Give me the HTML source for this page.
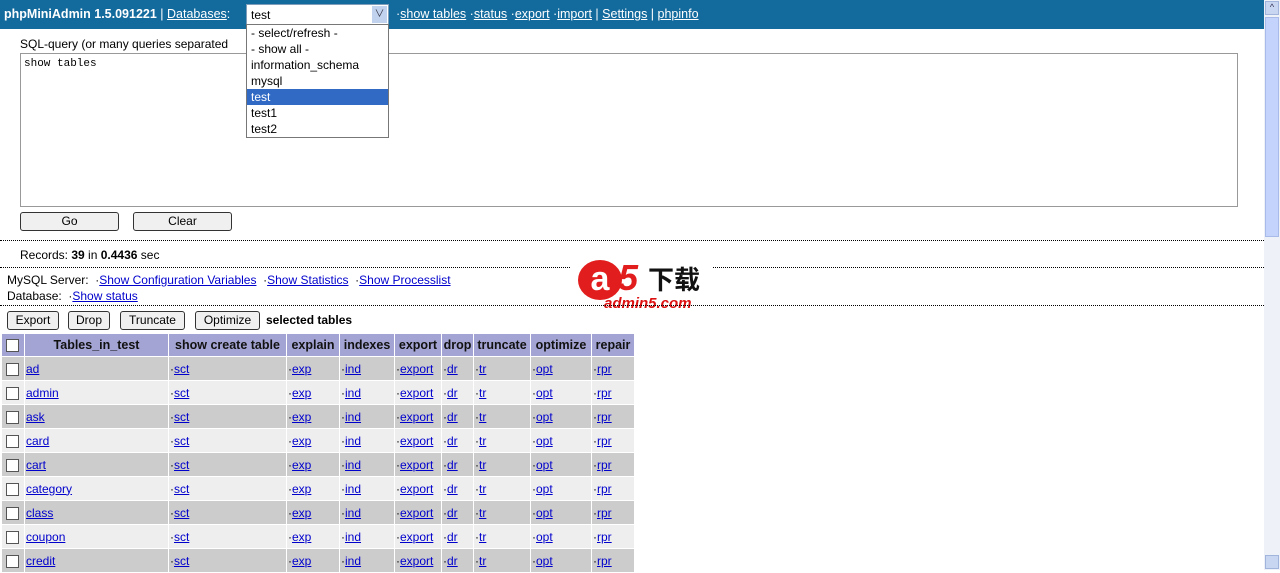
<!DOCTYPE html>
<html><head><meta charset="utf-8"><style>
body{margin:0;width:1280px;height:570px;overflow:hidden;background:#fff;font-family:"Liberation Sans","Noto Sans CJK SC",sans-serif;font-size:12px;position:relative}
a{color:#00c;text-decoration:underline}
.top{position:absolute;left:0;top:0;width:1264px;height:29px;background:#136a9d;color:#fff}
.top a{color:#fff}
.abs{position:absolute;white-space:nowrap}
.btn{position:absolute;border:1px solid #333;border-radius:3px;background:#f0f0f0;text-align:center;line-height:17px;height:17px;font-size:12px}
.dot{position:absolute;left:0;width:1264px;border-top:1px dotted #000}
table{position:absolute;left:1px;top:333px;border-collapse:separate;border-spacing:1px;font-size:12px;table-layout:fixed;width:634px}
td,th{height:23px;padding:0 1px;white-space:nowrap;overflow:hidden}
th{background:#a4a4d4;font-weight:bold;color:#111;height:22px;font-size:12.5px}
tr.o td{background:#cccccc}tr.e td{background:#eeeeee}
.cb{display:inline-block;width:11px;height:11px;border:1px solid #555;background:#fff;vertical-align:middle;margin-left:3px}
.sb{position:absolute;left:1264px;top:0;width:16px;height:570px;background:#eef2f8}
</style></head><body>
<div class="top">
<div class="abs" style="left:4px;top:7px;font-size:12.5px"><b>phpMiniAdmin 1.5.091221</b> | <a>Databases</a>:</div>
<div class="abs" style="left:246px;top:4px;width:141px;height:19px;background:#fff;border:1px solid #7f9db9;color:#000"><span style="position:absolute;left:4px;top:3px">test</span><span style="position:absolute;right:1px;top:1px;width:15px;height:17px;background:#c1d2ee;color:#334;font-size:10px;text-align:center;line-height:17px">&#8744;</span></div>
<div class="abs" style="left:396px;top:7px;font-size:12.5px">·<a>show tables</a> ·<a>status</a> ·<a>export</a> ·<a>import</a> | <a>Settings</a> | <a>phpinfo</a></div>
</div>
<div class="abs" style="left:20px;top:37px">SQL-query (or many queries separated</div>
<div class="abs" style="left:20px;top:53px;width:1218px;border:1px solid #999;font-family:'Liberation Mono',monospace;font-size:11px;padding:4px 3px;box-sizing:border-box;height:154px">show tables</div>
<div class="abs" style="left:246px;top:24px;width:141px;height:112px;background:#fff;border:1px solid #777;color:#000;line-height:16px">
<div style="padding-left:4px">- select/refresh -</div><div style="padding-left:4px">- show all -</div><div style="padding-left:4px">information_schema</div><div style="padding-left:4px">mysql</div><div style="padding-left:4px;background:#316ac5;color:#fff">test</div><div style="padding-left:4px">test1</div><div style="padding-left:4px">test2</div></div>
<div class="btn" style="left:20px;top:212px;width:97px">Go</div>
<div class="btn" style="left:133px;top:212px;width:97px">Clear</div>
<div class="dot" style="top:240px"></div>
<div class="abs" style="left:20px;top:248px">Records: <b>39</b> in <b>0.4436</b> sec</div>
<div class="dot" style="top:267px"></div>
<div class="abs" style="left:7px;top:273px">MySQL Server: &nbsp;·<a>Show Configuration Variables</a> &nbsp;·<a>Show Statistics</a> &nbsp;·<a>Show Processlist</a></div>
<div class="abs" style="left:7px;top:289px">Database: &nbsp;·<a>Show status</a></div>
<div class="abs" style="left:570px;top:258px;width:142px;height:55px;background:#fff">
<div style="position:absolute;left:8px;top:2px;width:44px;height:40px;border-radius:50%;background:#e21d1d;color:#fff;font:bold 34px/38px 'Liberation Sans';text-align:center">a</div>
<div style="position:absolute;left:48px;top:0;color:#e21d1d;font:bold italic 36px/40px 'Liberation Sans'">5</div>
<div style="position:absolute;left:78px;top:6px;font:bold 26px/30px 'Noto Sans CJK SC',sans-serif;color:#111">下载</div>
<div style="position:absolute;left:34px;top:38px;font:bold italic 15px/16px 'Liberation Sans';color:#d11">admin5.com</div></div>
<div class="dot" style="top:305px"></div>
<div class="btn" style="left:7px;top:311px;width:50px">Export</div>
<div class="btn" style="left:68px;top:311px;width:40px">Drop</div>
<div class="btn" style="left:120px;top:311px;width:63px">Truncate</div>
<div class="btn" style="left:195px;top:311px;width:63px">Optimize</div>
<div class="abs" style="left:266px;top:313px"><b>selected tables</b></div>
<table>
<colgroup><col style="width:22px"><col style="width:143px"><col style="width:117px"><col style="width:52px"><col style="width:54px"><col style="width:46px"><col style="width:31px"><col style="width:56px"><col style="width:60px"><col style="width:42px"></colgroup>
<tr><th style="text-align:left"><span class="cb"></span></th><th>Tables_in_test</th><th>show create table</th><th>explain</th><th>indexes</th><th>export</th><th>drop</th><th>truncate</th><th>optimize</th><th>repair</th></tr>
<tr class="o"><td><span class="cb"></span></td><td><a>ad</a></td><td>·<a>sct</a></td><td>·<a>exp</a></td><td>·<a>ind</a></td><td>·<a>export</a></td><td>·<a>dr</a></td><td>·<a>tr</a></td><td>·<a>opt</a></td><td>·<a>rpr</a></td></tr>
<tr class="e"><td><span class="cb"></span></td><td><a>admin</a></td><td>·<a>sct</a></td><td>·<a>exp</a></td><td>·<a>ind</a></td><td>·<a>export</a></td><td>·<a>dr</a></td><td>·<a>tr</a></td><td>·<a>opt</a></td><td>·<a>rpr</a></td></tr>
<tr class="o"><td><span class="cb"></span></td><td><a>ask</a></td><td>·<a>sct</a></td><td>·<a>exp</a></td><td>·<a>ind</a></td><td>·<a>export</a></td><td>·<a>dr</a></td><td>·<a>tr</a></td><td>·<a>opt</a></td><td>·<a>rpr</a></td></tr>
<tr class="e"><td><span class="cb"></span></td><td><a>card</a></td><td>·<a>sct</a></td><td>·<a>exp</a></td><td>·<a>ind</a></td><td>·<a>export</a></td><td>·<a>dr</a></td><td>·<a>tr</a></td><td>·<a>opt</a></td><td>·<a>rpr</a></td></tr>
<tr class="o"><td><span class="cb"></span></td><td><a>cart</a></td><td>·<a>sct</a></td><td>·<a>exp</a></td><td>·<a>ind</a></td><td>·<a>export</a></td><td>·<a>dr</a></td><td>·<a>tr</a></td><td>·<a>opt</a></td><td>·<a>rpr</a></td></tr>
<tr class="e"><td><span class="cb"></span></td><td><a>category</a></td><td>·<a>sct</a></td><td>·<a>exp</a></td><td>·<a>ind</a></td><td>·<a>export</a></td><td>·<a>dr</a></td><td>·<a>tr</a></td><td>·<a>opt</a></td><td>·<a>rpr</a></td></tr>
<tr class="o"><td><span class="cb"></span></td><td><a>class</a></td><td>·<a>sct</a></td><td>·<a>exp</a></td><td>·<a>ind</a></td><td>·<a>export</a></td><td>·<a>dr</a></td><td>·<a>tr</a></td><td>·<a>opt</a></td><td>·<a>rpr</a></td></tr>
<tr class="e"><td><span class="cb"></span></td><td><a>coupon</a></td><td>·<a>sct</a></td><td>·<a>exp</a></td><td>·<a>ind</a></td><td>·<a>export</a></td><td>·<a>dr</a></td><td>·<a>tr</a></td><td>·<a>opt</a></td><td>·<a>rpr</a></td></tr>
<tr class="o"><td><span class="cb"></span></td><td><a>credit</a></td><td>·<a>sct</a></td><td>·<a>exp</a></td><td>·<a>ind</a></td><td>·<a>export</a></td><td>·<a>dr</a></td><td>·<a>tr</a></td><td>·<a>opt</a></td><td>·<a>rpr</a></td></tr>
</table>
<div class="sb"><div style="position:absolute;left:1px;top:1px;width:14px;height:14px;background:#c8d6f2;border:1px solid #a0b4dc;box-sizing:border-box;font-size:9px;text-align:center;color:#335">^</div><div style="position:absolute;left:1px;top:17px;width:14px;height:220px;background:#c3d3fb;border:1px solid #a8bbe8;box-sizing:border-box"></div><div style="position:absolute;left:1px;top:555px;width:14px;height:14px;background:#c8d6f2;border:1px solid #a0b4dc;box-sizing:border-box"></div></div>
</body></html>
